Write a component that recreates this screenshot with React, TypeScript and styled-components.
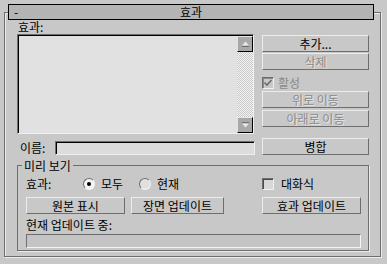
import React from 'react'
import styled, { createGlobalStyle } from 'styled-components'

const GlobalStyle = createGlobalStyle`
  html, body {
    margin: 0;
    padding: 0;
    background: #c8c8c8;
  }
  body {
    font-family: "Noto Sans CJK KR", "Noto Sans", sans-serif;
    font-size: 12px;
    color: #000;
  }
  * { box-sizing: border-box; }
`

const Page = styled.div`
  width: 387px;
  height: 264px;
  padding: 12px 0 0 4px;
`

const Rollout = styled.div`
  width: 377px;
  height: 245px;
  border: 1px solid #6e6e6e;
  box-shadow: inset 1px 1px 0 #ececec, 1px 1px 0 #ececec;
`

const TitleBar = styled.div`
  margin: -9px 0 0 3px;
  width: 366px;
  height: 16px;
  border: 1px solid #000;
  background: #b4b4b4;
  display: grid;
  grid-template-columns: 1fr auto 1fr;
  align-items: center;
  line-height: 14px;
`

const TitleSide = styled.span`
  padding-left: 5px;
`

const Body = styled.div`
  padding: 0 11px 0 12px;
`

const TopSection = styled.div`
  display: flex;
  align-items: flex-start;
`

const LeftColumn = styled.div`
  width: 238px;
  display: flex;
  flex-direction: column;
`

const FieldLabel = styled.div`
  height: 14px;
  line-height: 14px;
  padding-left: 1px;
`

const ListBox = styled.div`
  width: 237px;
  height: 100px;
  border: 1px solid;
  border-color: #6e6e6e #f0f0f0 #f0f0f0 #6e6e6e;
  box-shadow: inset 1px 1px 0 #000;
  background: #e1e1e1;
  display: flex;
  justify-content: flex-end;
`

const ScrollBar = styled.div`
  width: 16px;
  margin-top: 1px;
  display: flex;
  flex-direction: column;
`

const ScrollTrack = styled.div`
  flex: 1;
  background: repeating-conic-gradient(#c8c8c8 0 25%, #f4f4f4 0 50%) 0 0 / 2px 2px;
`

const ScrollButton = styled.div`
  width: 16px;
  height: 16px;
  background: #a8a8a8;
  border: 1px solid;
  border-color: #e4e4e4 #000 #000 #e4e4e4;
  display: flex;
  align-items: center;
  justify-content: center;
`

const NameRow = styled.div`
  margin-top: 7px;
  display: flex;
  height: 14px;
  line-height: 14px;
`

const NameLabel = styled.span`
  width: 38px;
  padding-left: 3px;
`

const TextInput = styled.div`
  width: 200px;
  height: 14px;
  border: 1px solid;
  border-color: #6e6e6e #f0f0f0 #f0f0f0 #6e6e6e;
  box-shadow: inset 1px 1px 0 #000;
  background: #dcdcdc;
`

const RightColumn = styled.div`
  width: 107px;
  margin-left: 7px;
  padding-top: 15px;
  display: flex;
  flex-direction: column;
`

const Button = styled.button<{ $top?: number; $w?: number }>`
  width: ${p => (p.$w ? `${p.$w}px` : '100%')};
  height: 17px;
  margin: ${p => p.$top ?? 0}px 0 0 0;
  padding: 0;
  background: #c8c8c8;
  border: 1px solid;
  border-color: #ececec #6e6e6e #6e6e6e #ececec;
  font: inherit;
  line-height: 15px;
  color: #000;
  &:disabled {
    color: #8a8a8a;
    text-shadow: 1px 1px 0 #e6e6e6;
  }
`

const CheckRow = styled.label<{ $top?: number; $gap: number; $disabled?: boolean }>`
  display: flex;
  align-items: center;
  gap: ${p => p.$gap}px;
  height: 12px;
  margin-top: ${p => p.$top ?? 0}px;
  line-height: 12px;
  color: ${p => (p.$disabled ? '#8a8a8a' : '#000')};
`

const CheckBox = styled.span<{ $disabled?: boolean }>`
  width: 12px;
  height: 12px;
  border: 1px solid;
  border-color: #6e6e6e #f0f0f0 #f0f0f0 #6e6e6e;
  box-shadow: inset 1px 1px 0 ${p => (p.$disabled ? '#8a8a8a' : '#4a4a4a')};
  background: ${p => (p.$disabled ? '#c8c8c8' : '#d8d8d8')};
  display: flex;
  align-items: center;
  justify-content: center;
`

const Group = styled.fieldset`
  margin: 4px 0 0 0;
  padding: 0;
  width: 352px;
  min-width: 0;
  border: 1px solid #6e6e6e;
  box-shadow: 1px 1px 0 #ececec;
`

const Legend = styled.legend`
  margin-left: 4px;
  padding: 0 2px;
  height: 13px;
  line-height: 13px;
`

const GroupContent = styled.div`
  padding: 5px 7px 2px 8px;
  display: flex;
  flex-direction: column;
`

const OptionRow = styled.div`
  display: flex;
  align-items: center;
  height: 14px;
  line-height: 14px;
`

const OptionLabel = styled.span`
  width: 57px;
`

const RadioOption = styled.label<{ $w: number }>`
  width: ${p => p.$w}px;
  display: flex;
  align-items: center;
  gap: 6px;
`

const Radio = styled.span<{ $on?: boolean }>`
  width: 12px;
  height: 12px;
  border-radius: 50%;
  border: 1px solid;
  border-color: #6e6e6e #f4f4f4 #f4f4f4 #6e6e6e;
  background: ${p => (p.$on ? '#f4f4f4' : '#e0e0e0')};
  display: flex;
  align-items: center;
  justify-content: center;
  &::after {
    content: '';
    width: 4px;
    height: 4px;
    border-radius: 50%;
    background: ${p => (p.$on ? '#000' : 'transparent')};
  }
`

const OptionEnd = styled.div`
  margin-left: auto;
  width: 99px;
`

const ButtonRow = styled.div`
  margin-top: 6px;
  display: flex;
  gap: 6px;
  & > :last-child {
    margin-left: auto;
  }
`

const StatusLabel = styled.div`
  margin-top: 4px;
  height: 14px;
  line-height: 14px;
`

const ProgressBar = styled.div`
  margin-top: 2px;
  height: 14px;
  border: 1px solid;
  border-color: #6e6e6e #f4f4f4 #f4f4f4 #6e6e6e;
  background: #c4c4c4;
`

const Arrow = ({ up }: { up?: boolean }) => (
  <svg width="9" height="6" viewBox="0 0 9 6">
    {up ? (
      <>
        <polygon points="4.5,0.5 8,4.5 1,4.5" fill="#e8e8e8" />
        <line x1="1" y1="5.5" x2="8" y2="5.5" stroke="#6e6e6e" />
      </>
    ) : (
      <>
        <line x1="1" y1="0.5" x2="8" y2="0.5" stroke="#6e6e6e" />
        <polygon points="1,1.5 8,1.5 4.5,5.5" fill="#e8e8e8" />
      </>
    )}
  </svg>
)

const CheckMark = () => (
  <svg width="8" height="8" viewBox="0 0 8 8">
    <polyline points="0.5,3.5 3,6 7.5,1" fill="none" stroke="#6e6e6e" strokeWidth="1.6" />
  </svg>
)

export default function App() {
  return (
    <>
      <GlobalStyle />
      <Page>
        <Rollout>
          <TitleBar>
            <TitleSide>-</TitleSide>
            <span>효과</span>
            <span />
          </TitleBar>
          <Body>
            <TopSection>
              <LeftColumn>
                <FieldLabel>효과:</FieldLabel>
                <ListBox>
                  <ScrollBar>
                    <ScrollButton><Arrow up /></ScrollButton>
                    <ScrollTrack />
                    <ScrollButton><Arrow /></ScrollButton>
                  </ScrollBar>
                </ListBox>
                <NameRow>
                  <NameLabel>이름:</NameLabel>
                  <TextInput />
                </NameRow>
              </LeftColumn>
              <RightColumn>
                <Button>추가...</Button>
                <Button $top={1} disabled>삭제</Button>
                <CheckRow $top={7} $gap={4} $disabled>
                  <CheckBox $disabled><CheckMark /></CheckBox>
                  활성
                </CheckRow>
                <Button $top={2} disabled>위로 이동</Button>
                <Button $top={2} disabled>아래로 이동</Button>
                <Button $top={11}>병합</Button>
              </RightColumn>
            </TopSection>
            <Group>
              <Legend>미리 보기</Legend>
              <GroupContent>
                <OptionRow>
                  <OptionLabel>효과:</OptionLabel>
                  <RadioOption $w={56}>
                    <Radio $on />
                    모두
                  </RadioOption>
                  <RadioOption $w={60}>
                    <Radio />
                    현재
                  </RadioOption>
                  <OptionEnd>
                    <CheckRow $gap={7}>
                      <CheckBox />
                      대화식
                    </CheckRow>
                  </OptionEnd>
                </OptionRow>
                <ButtonRow>
                  <Button $w={99}>원본 표시</Button>
                  <Button $w={93}>장면 업데이트</Button>
                  <Button $w={99}>효과 업데이트</Button>
                </ButtonRow>
                <StatusLabel>현재 업데이트 중:</StatusLabel>
                <ProgressBar />
              </GroupContent>
            </Group>
          </Body>
        </Rollout>
      </Page>
    </>
  )
}
